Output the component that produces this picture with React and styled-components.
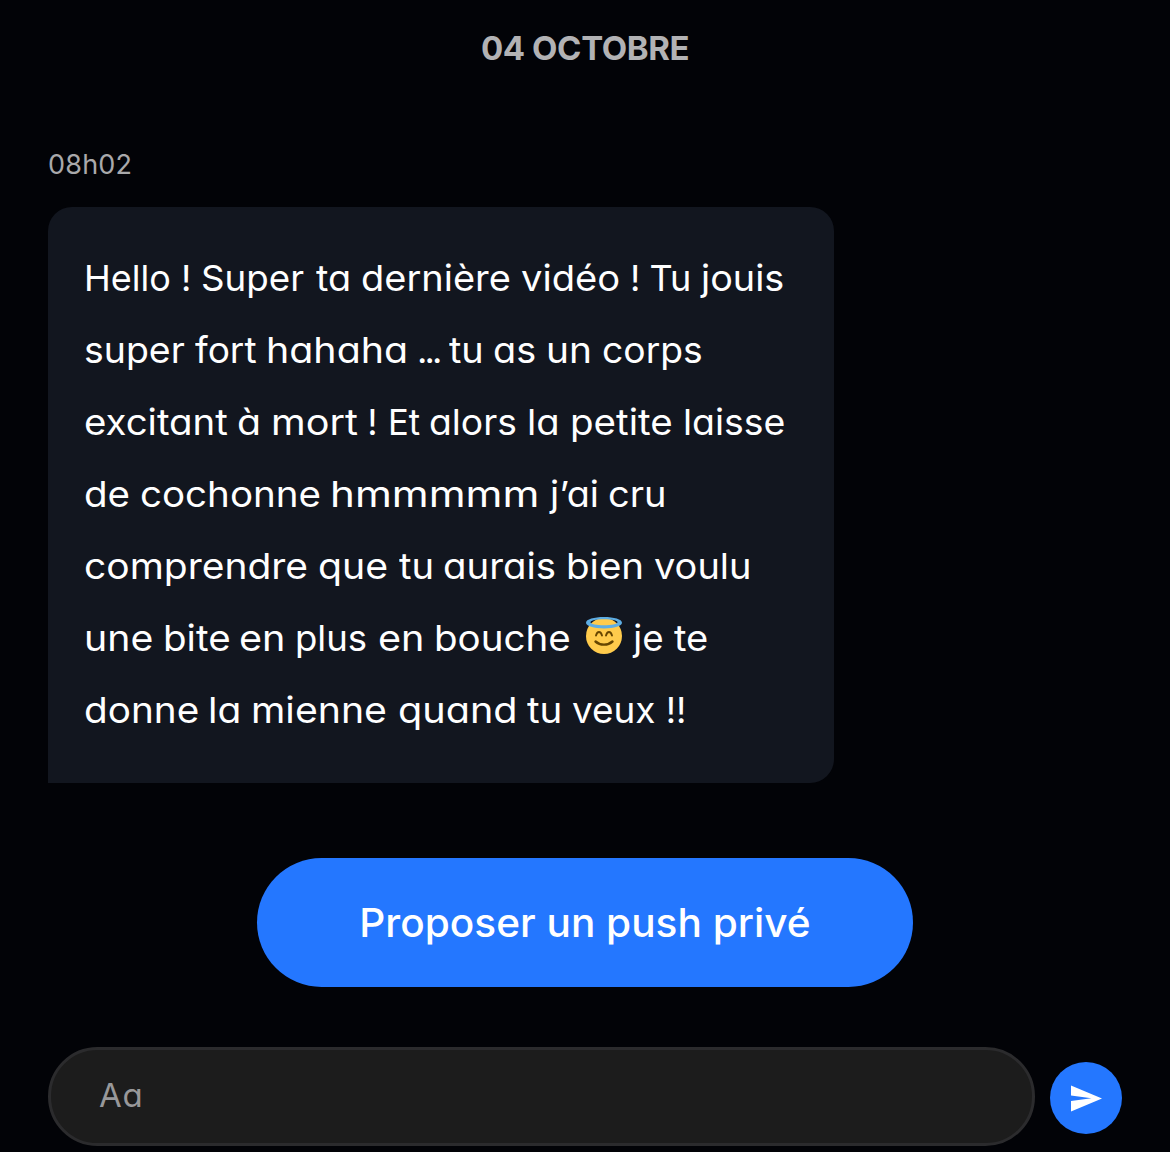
import React, { useState } from 'react';
import styled, { createGlobalStyle } from 'styled-components';

const GlobalStyle = createGlobalStyle`
  * {
    box-sizing: border-box;
  }

  body {
    margin: 0;
    background-color: #020307;
    font-family: Inter, 'Liberation Sans', sans-serif;
    /* single-storey a */
    font-feature-settings: 'cv11' 1, 'calt' 0;
  }
`;

const Page = styled.main`
  display: flex;
  flex-direction: column;
  height: 1152px;
  padding: 0 48px;
  overflow: hidden;
`;

const DateTitle = styled.h2`
  margin: 23px 0 0;
  text-align: center;
  font-size: 33px;
  line-height: 50px;
  font-weight: 700;
  letter-spacing: -0.4px;
  color: #b2b2b4;
`;

const Time = styled.time`
  margin-top: 72px;
  font-size: 27px;
  line-height: 40px;
  letter-spacing: 0.2px;
  color: #a9a9ab;
`;

const Bubble = styled.div`
  width: 786px;
  margin-top: 22px;
  padding: 35px 36px 37px;
  border-radius: 24px 24px 24px 0;
  background-color: #12161f;
`;

const Line = styled.div`
  display: flex;
  align-items: center;
  height: 72px;
  font-size: 36px;
  line-height: 72px;
  white-space: pre;
  color: #fff;
`;

const Word = styled.span`
  flex: none;
  margin-right: ${({ $gap }) => $gap || 0}px;
  letter-spacing: ${({ $spacing }) => $spacing || 0}px;
  transform: scaleX(${({ $stretch }) => $stretch || 1});
  transform-origin: left center;
`;

const Emoji = styled.svg`
  flex: none;
  width: 38px;
  height: 38px;
  margin: 0 0 6px 3px;
`;

const PushButton = styled.button`
  align-self: center;
  width: 656px;
  height: 129px;
  margin-top: 75px;
  padding: 0;
  border: none;
  border-radius: 65px;
  background-color: #2477ff;
  color: #fff;
  font: inherit;
  font-size: 39px;
  font-weight: 500;
`;

const ButtonLabel = styled.span`
  display: inline-block;
  transform: scaleX(1.04);
`;

const Composer = styled.form`
  display: flex;
  gap: 15px;
  margin-top: 60px;
`;

const Input = styled.input`
  width: 987px;
  height: 99px;
  padding: 0 48px 3px;
  border: 3px solid #2b2b2d;
  border-radius: 50px;
  outline: none;
  background-color: #1c1c1c;
  color: #fff;
  font: inherit;
  font-size: 33px;
  letter-spacing: 0.8px;

  &::placeholder {
    color: #98989a;
    opacity: 1;
  }
`;

const SendButton = styled.button`
  display: flex;
  align-items: center;
  justify-content: center;
  width: 72px;
  height: 72px;
  margin-top: 15px;
  padding: 0 0 0 1px;
  border: none;
  border-radius: 50%;
  background-color: #2477ff;
`;

const Halo = () => (
  <Emoji viewBox="0 0 38 38">
    <circle cx="19" cy="20" r="18" fill="#ffcb4c" />
    <path
      d="M19 1C9 1 1 3.300 1 6.700S9 12.400 19 12.400 37 10.100 37 6.700 29 1 19 1Zm0 2.200c7.500 0 13.500 1.200 13.500 3S26.500 9.200 19 9.200 5.500 8 5.500 6.200s6-3 13.500-3Z"
      fill="#5dade3"
      fillRule="evenodd"
    />
    <path
      d="M11 19.500c1.200-4.700 4.800-4.700 6 0M21 19.500c1.200-4.700 4.800-4.700 6 0"
      fill="none"
      stroke="#664500"
      strokeWidth="1.900"
      strokeLinecap="round"
    />
    <path
      d="M10.500 25.500c4.500 4.200 12.500 4.200 17 0"
      fill="none"
      stroke="#664500"
      strokeWidth="2.400"
      strokeLinecap="round"
    />
  </Emoji>
);

// [word, stretch, gap, letter spacing]
const lines = [
  [
    ['Hello '],
    ['! '],
    ['Super ', 1.02, 3.5],
    ['ta ', 1.05, 1.5],
    ['dernière ', 1.055, 8],
    ['vidéo ', 1.06, 5],
    ['! ', 1, -1],
    ['Tu ', 1, -0.5],
    ['jouis', 1.05],
  ],
  [
    ['super ', 1.04, 4],
    ['fort ', 1.03, 1],
    ['hahaha ', 1.093, 11],
    ['... ', 1, 2, -2.9],
    ['tu ', 1.05, 1],
    ['as ', 1.05, 2],
    ['un ', 1.08, 3.5],
    ['corps', 1.035],
  ],
  [
    ['excitant ', 1.067, 8],
    ['à ', 1.09, 2],
    ['mort ', 1.1, 7],
    ['! '],
    ['Et ', 0.96, -2],
    ['alors ', 1.035, 2.5],
    ['la ', 1.06, 2],
    ['petite ', 1.07, 7],
    ['laisse', 1.04],
  ],
  [
    ['de ', 1.07, 3],
    ['cochonne ', 1.07, 11],
    ['hmmmmm ', 1.17, 30],
    ['j’ai ', 1.05, 2],
    ['cru', 1.055],
  ],
  [
    ['comprendre ', 1.083, 17],
    ['que ', 1.09, 6],
    ['tu ', 1.06, 1],
    ['aurais ', 1.065, 7],
    ['bien ', 1.07, 5],
    ['voulu', 1.055],
  ],
  [
    ['une ', 1.09, 5],
    ['bite ', 1.07, 3],
    ['en ', 1.1, 4],
    ['plus ', 1.015, 1],
    ['en ', 1.1, 4],
    ['bouche ', 1.07, 10],
    ['😇'],
    [' je ', 1.02, 1.5],
    ['te', 1.06],
  ],
  [
    ['donne ', 1.075, 7],
    ['la ', 1.08, 2],
    ['mienne ', 1.09, 12],
    ['quand ', 1.1, 10],
    ['tu ', 1.07, 2],
    ['veux ', 1.025, 2],
    ['!!'],
  ],
];

const App = () => {
  const [message, setMessage] = useState('');

  return (
    <>
      <GlobalStyle />
      <Page>
        <DateTitle>04 OCTOBRE</DateTitle>
        <Time>08h02</Time>
        <Bubble>
          {lines.map((words, idx) => (
            <Line key={idx}>
              {words.map(([word, stretch, gap, spacing], i) =>
                word === '😇' ? (
                  <Halo key={i} />
                ) : (
                  <Word
                    key={i}
                    $stretch={stretch}
                    $gap={gap}
                    $spacing={spacing}
                  >
                    {word}
                  </Word>
                )
              )}
            </Line>
          ))}
        </Bubble>
        <PushButton>
          <ButtonLabel>Proposer un push privé</ButtonLabel>
        </PushButton>
        <Composer onSubmit={(e) => e.preventDefault()}>
          <Input
            placeholder="Aa"
            value={message}
            onChange={(e) => setMessage(e.target.value)}
          />
          <SendButton aria-label="Envoyer">
            <svg width="31" height="27" viewBox="0 0 32 27">
              <path d="M0 0 32 13.500 0 27V16L21 13.200 0 10.500Z" fill="#fff" />
            </svg>
          </SendButton>
        </Composer>
      </Page>
    </>
  );
};

export default App;
